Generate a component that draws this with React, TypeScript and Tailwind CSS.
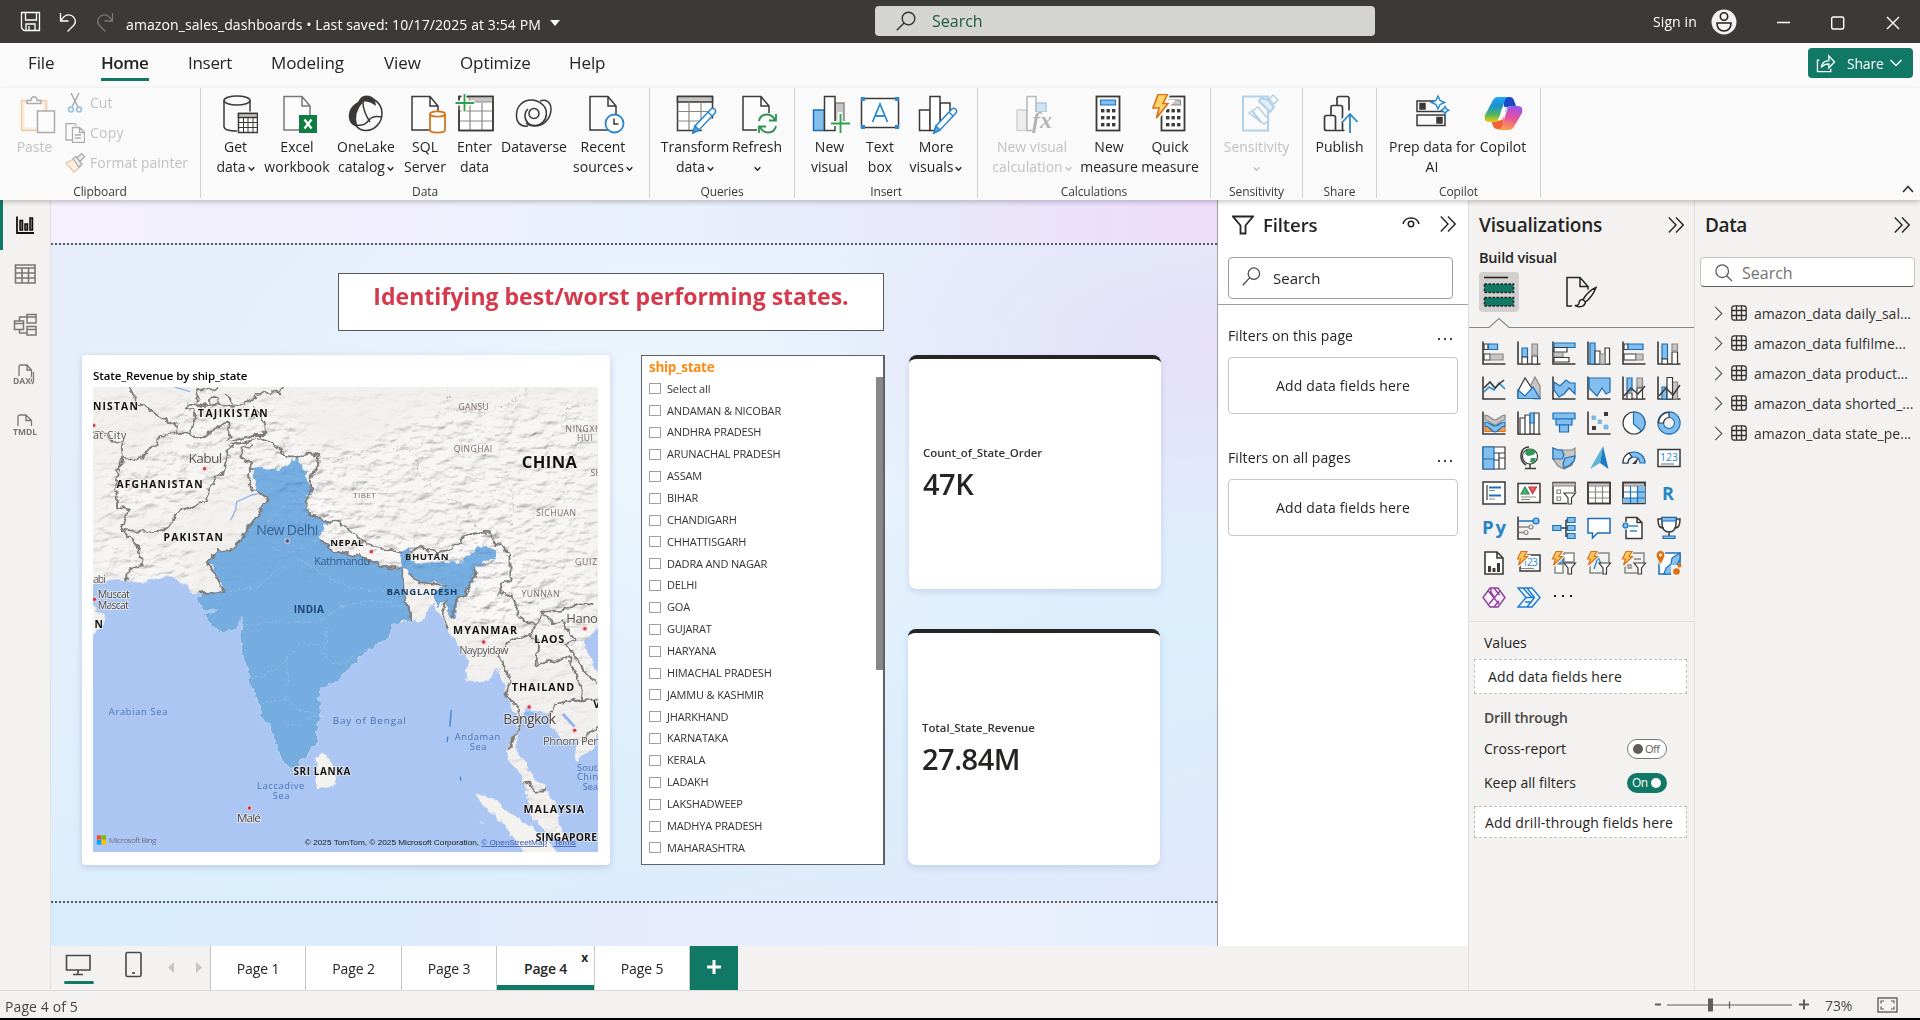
import React from "react";

type Kids = { children?: React.ReactNode };

const D = "#3b3a39";
const G = "#8a8886";
const L = "#c8c6c4";
const B = "#1a6fb8";
const F = "#83beec";

/* ---------- ribbon icons, drawn in a 44 x 40 box ---------- */
function RI({ children, dim }: Kids & { dim?: boolean }) {
  return (
    <svg viewBox="0 0 44 40" className={dim ? "h-10 w-11 shrink-0 opacity-35" : "h-10 w-11 shrink-0"} fill="none" stroke={D} strokeWidth="1.5">
      {children}
    </svg>
  );
}

const page = (x: number, s = D) => <path d={`M${x} 2.5h18l8 9.5v24h-26zM${x + 18} 2.5v9.5h8`} stroke={s} fill="#fcfcfc" />;
const pencil = (
  <g stroke="#2a86cc" fill="#fff" strokeWidth="1.5">
    <path d="M20 39l2-7 16-17c2-2 6 1 4 4l-16 17z" />
    <path d="M20 39l2-7 4 4z" fill="#5aa9e0" />
    <path d="M35 18l4 4" />
  </g>
);
const calc = (x: number, accent: string) => (
  <g>
    <rect x={x} y="2.5" width="23" height="34" fill="#fff" strokeWidth="1.8" />
    <rect x={x + 4} y="6" width="15" height="5" fill={accent} stroke={accent === F ? B : G} strokeWidth="1" />
    {[15, 22, 29].map((y) =>
      [4.5, 10, 15.5].map((dx) => <rect key={`${y}-${dx}`} x={x + dx} y={y} width="3.4" height="3.4" fill={D} stroke="none" />)
    )}
  </g>
);

const icGet = (
  <RI>
    <path d="M10 6.5v26c0 3 5 4.5 13 4.5M36 6.5v11" />
    <ellipse cx="23" cy="6.5" rx="13" ry="4.5" />
    <rect x="24.5" y="19.5" width="19" height="19" fill="#fff" />
    <rect x="24.5" y="19.5" width="19" height="4" fill={L} />
    <path d="M24.5 23.5h19M24.5 28.5h19M24.5 33.5h19M29.5 23.5v15M34 23.5v15M39 23.5v15" strokeWidth="1" />
  </RI>
);
const icExcel = (
  <RI>
    {page(9, "#7a7876")}
    <rect x="24" y="21" width="18" height="18" fill="#107c41" stroke="none" />
    <path d="M29.5 25.5l7 9M36.5 25.5l-7 9" stroke="#fff" strokeWidth="2.2" />
  </RI>
);
const icLake = (
  <RI>
    <path d="M19 7c-8 2-14 8-13.5 16 .5 5 3 8 7 9-3-9 0-18 6.5-25z" fill={D} />
    <path d="M15 8c2-5 6-6.5 10-5.5 4 1 6 4 6 8-5-4-10-5-16-2.5z" fill={D} />
    <path d="M29 5c6 3 9 8.5 9 14.5 0 9-7 17-16 17-4 0-8-2-10-5" />
    <path d="M19 8c0 8 3 14 7 20M12 31c7 1 10-1 13-5s8-4 13-3" />
  </RI>
);
const icSql = (
  <RI>
    {page(9)}
    <path d="M27 20v16c0 3.5 15 3.5 15 0V20" fill="#fff" stroke="#d8741c" strokeWidth="1.8" />
    <ellipse cx="34.5" cy="20" rx="7.5" ry="2.6" fill="#fff" stroke="#d8741c" strokeWidth="1.8" />
  </RI>
);
const icEnter = (
  <RI>
    <rect x="6" y="2.5" width="34" height="34" fill="#fff" />
    <rect x="16" y="2.5" width="24" height="5.5" fill={L} stroke={G} strokeWidth="1" />
    <path d="M6 17h34M6 27h34M17 9v28M29 9v28" stroke={G} strokeWidth="1.2" />
    <path d="M6 8V2.5h34v34H6V16" />
    <path d="M11 -1v20M1.5 9h20" stroke="#fafafa" strokeWidth="5" />
    <path d="M11.5 0v17.5M2.5 9h18.5" stroke="#2fa14b" strokeWidth="1.8" />
  </RI>
);
const icVerse = (
  <RI>
    <circle cx="22" cy="19.5" r="5" />
    <path d="M16 32C8 33 4 28 4.5 20 5 12 11 6 19 6c5 0 9 2 12 5 5 5 4 13 0 17-4 4-11 5-15 1-4-4-4-11 0-14" />
    <path d="M28 7c6-2 11 1 11 8 0 9-7 17-16 17-4 0-7-1-9-3" />
  </RI>
);
const icRecent = (
  <RI>
    {page(9)}
    <circle cx="33.5" cy="29.5" r="9" fill="#fff" stroke="#2a86cc" strokeWidth="1.8" />
    <path d="M33 24.5v5.5h4.5" />
  </RI>
);
const icTransform = (
  <RI>
    <rect x="4.5" y="2.5" width="35" height="34" fill="#fff" />
    <rect x="4.5" y="2.5" width="35" height="5.5" fill={L} />
    <path d="M4.5 17.5h35M4.5 27h28M16 8v28M28 8v20" stroke={G} strokeWidth="1.2" />
    <path d="M24 42l16-18h6v16z" fill="#fafafa" stroke="none" />
    {pencil}
  </RI>
);
const icRefresh = (
  <RI>
    {page(8)}
    <rect x="22" y="19" width="21" height="21" fill="#fafafa" stroke="none" />
    <path d="M24 27c1-5 5-6.5 8-6.5 4 0 6.5 2.5 8 5.5M41 20v6.5h-7M41 32c-1 5-5 6.5-8 6.5-4 0-6.5-2.5-8-5.5M24 39v-6.5h7" stroke="#2f9150" strokeWidth="1.8" />
  </RI>
);
const icNewVis = (
  <RI>
    <rect x="5.5" y="16" width="11" height="20.5" fill={F} stroke={B} />
    <rect x="27" y="9" width="9" height="20" fill={L} stroke={G} />
    <rect x="16.5" y="2.5" width="10.5" height="34" fill="#fff" />
    <path d="M32 18v22M22 29.5h22" stroke="#fafafa" strokeWidth="5" />
    <path d="M32.5 20v19M23 29.5h19" stroke="#2fa14b" strokeWidth="1.8" />
  </RI>
);
const icText = (
  <RI>
    <rect x="3.5" y="4.5" width="37" height="29" fill="#fff" />
    {[3, 37].map((x) => [3, 31].map((y) => <rect key={`${x}${y}`} x={x} y={y} width="4" height="4" fill="#2a8ad4" stroke="none" />))}
    <path d="M14.5 28l7.5-18 7.5 18M17.5 22h9" stroke="#2a8ad4" strokeWidth="1.8" />
  </RI>
);
const icMore = (
  <RI>
    <rect x="5.5" y="16" width="10.5" height="20.5" fill="#fff" />
    <rect x="26" y="9" width="10" height="27.5" fill="#fff" />
    <rect x="16" y="2.5" width="10" height="34" fill="#fff" />
    <path d="M18 42l20-26h8v24z" fill="#fafafa" stroke="none" />
    {pencil}
  </RI>
);
const icNewCalc = (
  <RI dim>
    <rect x="7" y="16" width="10" height="20.5" fill="#d8d6d4" stroke={G} />
    <rect x="26" y="9" width="10" height="9" fill={F} stroke={B} />
    <rect x="17" y="2.5" width="9" height="34" fill="#fff" />
    <rect x="22" y="18" width="22" height="22" fill="#fafafa" stroke="none" />
    <text x="22" y="34" fontFamily="Liberation Serif, serif" fontStyle="italic" fontWeight="700" fontSize="24" fill="#333" stroke="none">fx</text>
  </RI>
);
const icMeasure = <RI>{calc(9.5, F)}</RI>;
const icQuick = (
  <RI>
    {calc(13.5, L)}
    <path d="M9 -1h12l-5 9h7L9 24l2.5-9H4z" fill="#fafafa" stroke="#fafafa" strokeWidth="4" />
    <path d="M10 .5h9.5l-4.5 9h5L8.5 24l2.5-10H5z" fill="#fdd36b" stroke="#d8741c" strokeWidth="1.6" />
  </RI>
);
const icSens = (
  <RI dim>
    <rect x="8" y="2.5" width="25" height="34" stroke="#2a86cc" strokeWidth="2" />
    <path d="M14 19l9-6 11 13-5 4z" fill="#fff" stroke="#2a86cc" />
    <path d="M17 17l9 11M26 4l7 2 6 7-4 5-11-11z" fill="#b9d9f0" stroke="#2a86cc" strokeWidth="2" />
    <path d="M34 5l4-4 5 5-4 4z" fill="#fff" stroke="#2a86cc" />
  </RI>
);
const icPublish = (
  <RI>
    <path d="M6.5 23.5q0-2 2-2h7q2 0 2 2v13h-9q-2 0-2-2zM13 21v-7.5q0-2 2-2h7.5q2 0 2 2v23M19 11V4.5q0-2 2-2h8q2 0 2 2v12M17.5 36.5h9" strokeWidth="1.7" />
    <path d="M32 20v19M24.5 28l7.5-8 7.5 8" stroke="#fafafa" strokeWidth="5" />
    <path d="M32 20.5V39M24.5 28l7.5-8 7.5 8" stroke="#2a86cc" strokeWidth="1.8" />
  </RI>
);
const icPrep = (
  <RI>
    <rect x="7" y="7" width="28" height="10.5" />
    <rect x="7" y="21" width="28" height="10.5" />
    <rect x="10" y="9.5" width="5" height="5.5" fill={D} />
    <rect x="27" y="23.5" width="5" height="5.5" fill={D} />
    <path d="M19 0h20v16h-4l-2 1z" fill="#fafafa" stroke="none" />
    <path d="M28 2l2 4.5 4.5 2-4.5 2-2 4.5-2-4.5-4.5-2 4.5-2z" stroke="#2a8ad4" fill="#fff" />
    <path d="M35 12.5l1.3 2.4 2.4 1.3-2.4 1.3L35 20l-1.3-2.5-2.4-1.3 2.4-1.3z" stroke="#2a8ad4" fill="#fff" />
  </RI>
);
const icCopilot = (
  <svg viewBox="0 0 44 40" className="h-10 w-11 shrink-0">
    <defs>
      <linearGradient id="cpA" x1="0" y1="0" x2="0" y2="1">
        <stop offset="0" stopColor="#1fa5f0" />
        <stop offset=".35" stopColor="#1d8fd0" />
        <stop offset=".7" stopColor="#4fb860" />
        <stop offset="1" stopColor="#f2c811" />
      </linearGradient>
      <linearGradient id="cpB" x1=".6" y1="0" x2=".4" y2="1">
        <stop offset="0" stopColor="#9a55ee" />
        <stop offset=".5" stopColor="#e8539a" />
        <stop offset="1" stopColor="#fda047" />
      </linearGradient>
    </defs>
    <path d="M22 3h7c3 0 4 3 5 6l1 3h-4c-5 0-6 3-7 7z" fill="#1b48c8" />
    <path d="M22 35h-6c-3 0-4-3-5-6l-1-3h6c4 0 6-3 7-7z" fill="#f0643c" />
    <path d="M11 8c1-3 3-5 6-5h11c-3 0-4 3-5 6l-4 14c-1 3-2 5-5 5H8c-4 0-5-3-4-7z" fill="url(#cpA)" />
    <path d="M34 31c-1 3-4 5-7 5H16c4 0 5-4 6-7l4-13c1-3 2-4 5-4h6c4 0 5 3 4 7z" fill="url(#cpB)" />
    <path d="M22.5 13h3.8c-1.5 1.5-2 4-3 7.5-1 4-2 5.5-4.5 6h-2.5c2-2 3.5-8 4-10 .4-1.6 1-3 2.2-3.5z" fill="#fff" />
  </svg>
);

function Caret({ className = "" }: { className?: string }) {
  return (
    <svg viewBox="0 0 8 6" className={"inline-block h-1.5 w-[7px] " + className} fill="none" stroke="currentColor" strokeWidth="1.6">
      <path d="M.8 1l3.2 3.4L7.2 1" />
    </svg>
  );
}

type BtnProps = { w: string; icon: React.ReactNode; a: string; b?: string; caret?: boolean; dim?: boolean };
function Btn({ w, icon, a, b, caret, dim }: BtnProps) {
  return (
    <div className={`flex shrink-0 flex-col items-center whitespace-nowrap text-[14px] leading-5 tracking-[0.02px] ${w} ${dim ? "text-[#c4c2c0]" : "text-[#252423]"}`}>
      {icon}
      <span className="mt-[3px]">{a}</span>
      <span className="flex h-5 items-center gap-0.5">
        {b}
        {caret && <Caret className="mt-1" />}
      </span>
    </div>
  );
}

function Group({ w, label, pl = "", children, center }: Kids & { w: string; label: string; pl?: string; center?: boolean }) {
  return (
    <div className={`flex h-[110px] shrink-0 flex-col border-r border-[#d2d0ce] ${w}`}>
      <div className={`flex h-[97px] shrink-0 pt-1.5 ${pl} ${center ? "justify-center" : ""}`}>{children}</div>
      <div className="text-center text-[12px] leading-[13px] tracking-[-0.1px] text-[#3b3a39]">{label}</div>
    </div>
  );
}

/* ---------- title bar, menu and ribbon ---------- */
function TitleBar() {
  return (
    <div className="flex h-[43px] items-center bg-[#3b3a37] text-white">
      <svg viewBox="0 0 100 24" className="ml-5 h-6 w-[100px] shrink-0" fill="none" stroke="#fff" strokeWidth="1.3">
        <path d="M1.5 2.5h18v18H4l-2.5-2.5zM5.5 2.5v7.5h11V2.5M6 20.5v-6.5h9v6.5M9 16v4.5" />
        <path d="M40.5 3v8h8M41 10.5c3-5 7-6.5 10.5-5 4 2 5 6.5 2.5 9.5l-6.5 6.5" />
        <path d="M92.5 3v8h-8M92 10.5c-3-5-7-6.5-10.5-5-4 2-5 6.5-2.5 9.5l6.5 6.5" stroke="#7c7a78" />
      </svg>
      <div className="ml-[6px] mt-[5px] w-[416px] shrink-0 whitespace-nowrap text-[14px] tracking-[0.1px]">
        amazon_sales_dashboards • Last saved: 10/17/2025 at 3:54 PM
      </div>
      <svg viewBox="0 0 10 6" className="ml-2 mt-0.5 h-1.5 w-2.5 shrink-0" fill="#fff"><path d="M0 0h10L5 6z" /></svg>
      <div className="-mt-px ml-[315px] flex h-[30px] w-[500px] shrink-0 items-center rounded-sm bg-[#d4d4d2] text-[16px] text-[#1d5a48]">
        <svg viewBox="0 0 20 20" className="ml-[21px] mr-4 h-5 w-5" fill="none" stroke="#333" strokeWidth="1.4">
          <circle cx="12.5" cy="7.5" r="6.3" /><path d="M8 12L.8 19.2" />
        </svg>
        Search
      </div>
      <div className="ml-[278px] w-[47px] whitespace-nowrap text-[14px] tracking-[0.1px]">Sign in</div>
      <svg viewBox="0 0 26 26" className="ml-[11px] h-[26px] w-[26px]" fill="none" stroke="#222" strokeWidth="1.6">
        <circle cx="13" cy="13" r="12.5" fill="#f3f2f1" stroke="none" />
        <circle cx="13" cy="7.5" r="3.7" /><path d="M6 14h14c0 5-3 8-7 8s-7-3-7-8z" />
      </svg>
      <svg viewBox="0 0 124 14" className="ml-[39px] mt-[3px] h-3.5 w-[124px]" fill="none" stroke="#fff" strokeWidth="1.4">
        <path d="M1 6.5h13M111 1l12 12M123 1l-12 12" />
        <rect x="55.7" y="1" width="12" height="12" rx="1.5" />
      </svg>
    </div>
  );
}

function Menu() {
  return (
    <div className="flex h-[45px] items-start bg-[#fafafa] text-[17px] text-[#252423]">
      <div className="flex whitespace-nowrap pt-[7px] leading-[26px] tracking-[-0.1px]">
        <span className="ml-7 w-[73px]">File</span>
        <span className="flex w-[48px] flex-col font-semibold tracking-[-0.45px]">Home<i className="mt-[2px] block h-[3px] bg-[#117865]" /></span>
        <span className="ml-[39px] w-[83px] tracking-[-0.3px]">Insert</span>
        <span className="w-[113px]">Modeling</span>
        <span className="w-[76px]">View</span>
        <span className="w-[109px]">Optimize</span>
        <span>Help</span>
      </div>
      <div className="ml-auto mr-[7px] mt-[5px] flex h-[30px] w-[105px] items-center rounded bg-[#117865] text-[14px] text-white">
        <svg viewBox="0 0 20 20" className="ml-2 mr-[11px] h-[19px] w-5" fill="none" stroke="#fff" strokeWidth="1.4">
          <path d="M3 6.5H1v12h14v-3M5 14c1-5 4-7 8-7V2l6 6.5-6 6v-4c-4 0-6 1-8 3.5z" />
        </svg>
        <span className="tracking-[-0.2px]">Share</span>
        <svg viewBox="0 0 12 8" className="ml-[6px] h-2 w-3" fill="none" stroke="#fff" strokeWidth="1.4"><path d="M.5 1L6 6.5 11.5 1" /></svg>
      </div>
    </div>
  );
}

function Ribbon() {
  return (
    <div className="relative z-10 flex h-[112px] bg-[#fafafa] shadow-[0_2px_5px_rgba(0,0,0,0.22)]">
      <div className="flex h-[110px] w-[201px] shrink-0 flex-col border-r border-[#d2d0ce]">
        <div className="flex h-[97px] shrink-0">
          <div className="ml-2.5 flex w-[50px] flex-col items-center pt-[6px] text-[14px] leading-5 text-[#c4c2c0]">
            <svg viewBox="0 0 44 40" className="h-10 w-11 opacity-40" fill="none" stroke={D} strokeWidth="1.5">
              <rect x="8.5" y="6.5" width="25" height="30" stroke="#d98f35" fill="#f8d8a8" />
              <rect x="11.5" y="9.5" width="19" height="24" stroke="none" fill="#fff" />
              <path d="M14 9.5V6.5h4c0-5 6-5 6 0h4v3z" fill="#fff" />
              <rect x="24.5" y="17" width="17" height="21.5" fill="#fff" />
            </svg>
            <span className="-ml-px mt-[3px]">Paste</span>
          </div>
          <div className="ml-[5px] flex flex-col whitespace-nowrap text-[14px] leading-[30px] text-[#c4c2c0]">
            <div className="flex items-center">
              <svg viewBox="0 0 20 20" className="mr-[5px] h-5 w-5 opacity-45" fill="none" stroke={D} strokeWidth="1.3">
                <path d="M6 0l7 14M14 0L7 14" /><g stroke="#2a86cc" strokeWidth="1.8"><circle cx="6" cy="16.5" r="2.4" /><circle cx="14" cy="16.5" r="2.4" /></g>
              </svg>
              Cut
            </div>
            <div className="flex items-center">
              <svg viewBox="0 0 20 20" className="mr-[5px] h-5 w-5 opacity-40" fill="none" stroke={D} strokeWidth="1.3">
                <path d="M7 17H1V.7h9l1.5 2M7.5 4.5h7l5 5v10h-12zM14.5 4.5v5h5M10 12h6M10 15h6" />
              </svg>
              <span className="tracking-[0.25px]">Copy</span>
            </div>
            <div className="flex items-center">
              <svg viewBox="0 0 20 20" className="mr-[5px] h-5 w-5 opacity-40" fill="none" stroke={D} strokeWidth="1.3">
                <path d="M1 10l8-4 6 8-6 5z" stroke="#d8741c" fill="#fbe0bd" /><path d="M8 5.5l3-2 6 8-3 2.5zM12 5l4.5-4.5 3 3L15 8.5" fill="#ddd" />
              </svg>
              <span className="tracking-[0.02px]">Format painter</span>
            </div>
          </div>
        </div>
        <div className="text-center text-[12px] leading-[13px] tracking-[-0.1px] text-[#3b3a39]">Clipboard</div>
      </div>
      <Group w="w-[449px]" label="Data" pl="pl-[4px]">
        <Btn w="w-[61px]" icon={icGet} a="Get" b="data" caret />
        <Btn w="w-[62px]" icon={icExcel} a="Excel" b="workbook" />
        <Btn w="w-[76px]" icon={icLake} a="OneLake" b="catalog" caret />
        <Btn w="w-[42px]" icon={icSql} a="SQL" b="Server" />
        <Btn w="w-[57px]" icon={icEnter} a="Enter" b="data" />
        <Btn w="w-[62px]" icon={icVerse} a="Dataverse" />
        <Btn w="w-[76px]" icon={icRecent} a="Recent" b="sources" caret />
      </Group>
      <Group w="w-[145px]" label="Queries" pl="pl-[10px]">
        <Btn w="w-[70px]" icon={icTransform} a="Transform" b="data" caret />
        <Btn w="w-[54px]" icon={icRefresh} a="Refresh" caret />
      </Group>
      <Group w="w-[183px]" label="Insert" pl="pl-[5px]">
        <Btn w="w-[59px]" icon={icNewVis} a="New" b="visual" />
        <Btn w="w-[42px]" icon={icText} a="Text" b="box" />
        <Btn w="w-[70px]" icon={icMore} a="More" b="visuals" caret />
      </Group>
      <Group w="w-[233px]" label="Calculations" pl="pl-[5px]">
        <Btn w="w-[98px]" icon={icNewCalc} a="New visual" b="calculation" caret dim />
        <Btn w="w-[56px]" icon={icMeasure} a="New" b="measure" />
        <Btn w="w-[66px]" icon={icQuick} a="Quick" b="measure" />
      </Group>
      <Group w="w-[92px]" label="Sensitivity" center>
        <Btn w="w-[70px]" icon={icSens} a="Sensitivity" caret dim />
      </Group>
      <Group w="w-[74px]" label="Share" center>
        <Btn w="w-[60px]" icon={icPublish} a="Publish" />
      </Group>
      <Group w="w-[164px]" label="Copilot" pl="pl-[5px]">
        <Btn w="w-[100px]" icon={icPrep} a="Prep data for" b="AI" />
        <Btn w="w-[42px]" icon={icCopilot} a="Copilot" />
      </Group>
      <svg viewBox="0 0 12 8" className="mb-[7px] ml-auto mr-[6px] h-2 w-3 self-end" fill="none" stroke={D} strokeWidth="1.8"><path d="M1 7l5-5.5L11 7" /></svg>
    </div>
  );
}

/* ---------- left rail ---------- */
function Rail() {
  const s = "h-6 w-6 shrink-0";
  return (
    <div className="flex w-[51px] shrink-0 border-r border-[#e1dfdd] bg-[#f3f2f1]">
      <div className="h-[50px] w-[3px] bg-[#117865]" />
      <div className="flex flex-1 flex-col items-center gap-[26px] pr-[3px] pt-[13px]">
        <svg viewBox="0 0 24 24" className={s} fill="none" stroke="#111" strokeWidth="1.5"><path d="M4 3.5v16.5h17" strokeWidth="1.8" /><path d="M7 7.5h2.5v9.5H7zM12 11h2.5v6H12zM17 5h2.5v12H17z" fill="#8a8886" /></svg>
        <svg viewBox="0 0 24 24" className={s} fill="none" stroke="#797775" strokeWidth="1.6"><path d="M2.5 2h19.5v18H2.5zM2.5 5h19.5M2.5 10h19.5M2.5 15h19.5M9 5v15M15.5 5v15" /></svg>
        <svg viewBox="0 0 24 24" className={s} fill="none" stroke="#797775" strokeWidth="1.5"><path d="M1.5 8h9v8.5h-9zM1.5 10.5h9M14 1.5h9v8.5h-9zM14 4h9M14 13.5h9V22h-9zM14 16.5h9M6.5 8V4H14M6.5 16.5V20H14" /></svg>
        <svg viewBox="0 0 24 24" className={s} fill="none" stroke="#797775" strokeWidth="1.3"><path d="M6 13V4q0-2 2-2h6l4.5 5v9q0 4-3 4M14 2v5h4.5M20.5 9v8c0 3-1 4-3 4.5" /><text x="0" y="20.5" fontSize="8.5" fontWeight="700" fill="#797775" stroke="#f3f2f1" strokeWidth="2" paintOrder="stroke" fontFamily="Open Sans, sans-serif">DAX</text></svg>
        <svg viewBox="0 0 24 24" className={s} fill="none" stroke="#797775" strokeWidth="1.3"><path d="M5 13V4q0-2 2-2h6l5.5 5.5v5.5M13 2v5.5h5.5" /><text x="0" y="22" fontSize="8.5" fontWeight="700" textLength="24" fill="#797775" stroke="none" fontFamily="Open Sans, sans-serif">TMDL</text></svg>
      </div>
    </div>
  );
}

/* ---------- map ---------- */
const LAND =
  "M20 120H1530V865H1504L1462 910 1470 935 1478 950 1504 1000H1530V1180H1504L1490 1220 1440 1265 1435 1230 1450 1210 1420 1200 1400 1195 1370 1160 1362 1125 1330 1115 1300 1105 1285 1125 1280 1155 1265 1200 1270 1240 1300 1280 1310 1310 1350 1340 1385 1400 1395 1460 1418 1500 1390 1505 1360 1480 1310 1430 1300 1380 1295 1330 1270 1290 1240 1260 1245 1220 1270 1170 1265 1130 1250 1090 1235 1050 1225 1010 1210 985 1190 1015 1170 1028 1150 1030 1118 1020 1130 970 1110 930 1085 890 1068 870 1060 855 1050 830 1025 795 1010 805 1000 835 965 845 930 845 900 700 420 735 395 765 345 760 320 758 312 738 290 725 275 712 240 715 200 718 170 730 140 725 100 718 80 722 38 735H20Z";
const INDIA =
  "M508 388L525 382 545 388 580 388 605 375 630 354 640 375 642 385 658 395 655 415 662 425 675 445 670 468 648 465 658 490 658 512 672 518 690 530 720 548 700 575 697 600 718 612 740 635 765 640 780 648 815 650 850 665 880 680 910 683 932 680 935 635 950 625 957 635 955 660 980 672 1060 668 1110 665 1140 640 1160 622 1180 620 1203 632 1205 655 1192 652 1170 670 1148 685 1145 705 1137 735 1125 750 1118 765 1097 770 1093 800 1090 830 1078 835 1070 815 1065 780 1052 785 1040 803 1030 785 1025 768 1040 745 1060 740 1058 730 1030 725 985 727 980 712 960 702 940 685 932 695 940 720 935 750 950 780 958 815 965 845 955 840 945 845 938 835 925 845 900 852 900 880 885 900 870 908 835 925 815 950 790 975 765 1000 755 1015 720 1035 712 1040 698 1045 693 1070 698 1110 695 1140 685 1175 685 1215 668 1222 662 1242 640 1255 632 1275 612 1284 590 1260 580 1235 570 1200 555 1165 545 1150 530 1130 525 1095 490 1020 485 980 472 930 470 880 474 850 464 826 455 858 435 870 415 877 385 858 360 824 390 820 402 805 370 808 345 790 343 775 360 762 418 755 415 730 395 705 390 680 372 665 385 645 400 630 415 635 450 620 460 600 480 580 485 560 505 540 528 510 525 490 548 478 530 462 512 450 515 430 507 410Z";
const ISLANDS =
  "M705 1235L728 1262 745 1310 738 1338 715 1347 690 1340 683 1300 685 1262ZM1148 1360L1200 1375 1250 1420 1310 1460 1360 1500 1395 1550H1295L1262 1500 1225 1450 1200 1420 1165 1390ZM20 795H38L50 812 76 828 70 850 50 870 38 888H20ZM1160 1445L1178 1456 1165 1452ZM1504 1150L1440 1262 1440 1230Z";
const BORDERS =
  "M145 141L165 185 195 205 225 225 265 250 285 262 280 280 245 283 230 290 225 315 200 330 185 350 165 362 125 350M38 275L60 270 85 285 92 305 120 310 125 350 115 380 105 420 108 500 140 508 135 530 118 565 150 575 200 575 245 570 275 545 278 525 310 500 322 508 345 490 365 490 375 440 390 430 388 410 415 405 425 370 435 345 425 330 450 312 480 306 520 295 560 310 580 330 605 352 630 352 660 338 695 345 690 380 670 410 672 450M118 565L150 600 170 625 172 650 185 658 182 676 150 685 138 700 135 727M285 278L320 282 330 295 370 285 400 260 430 250 437 290 430 305M320 282L335 250 330 215 312 208 315 190 360 198 400 190 430 200 470 190 505 180 510 165 540 155 580 160 590 141M505 198L530 230 540 285 500 285 440 305M345 190L335 162 348 150 380 152 400 141M380 190C360 170 405 160 405 190M425 165L445 190M508 388L490 385 492 420 498 448 525 460 548 478 525 490 528 510 505 540 480 580 450 620 415 635 400 630 372 665 395 705 418 755 345 760M490 385L500 372 465 350 470 325 500 315M672 450L658 475 658 512 720 548 740 542 780 570 820 600 850 620 895 628 935 635M697 600L740 635 815 650 880 680 932 683M957 635L990 620 1040 640 1080 625 1115 590 1145 580 1190 578 1205 615 1225 612 1250 650 1250 720 1225 728 1220 760 1255 770 1275 810 1270 825 1300 850 1325 850 1345 815 1400 812 1450 790 1490 795M1148 685L1145 705 1118 765 1097 770 1078 835M1068 870L1052 820 1065 780M935 690L940 750 965 845M960 702L985 727 1060 735M1325 850L1310 885 1250 900 1215 940 1230 980 1250 1020 1238 1060 1268 1100 1280 1150 1262 1190 1248 1225M1310 885L1330 910 1325 980 1360 960 1380 965 1420 950 1440 1000 1455 1040 1458 1080 1380 1090 1362 1125M1345 825L1380 850 1400 840 1410 860 1440 900 1410 915 1430 940 1470 1000 1504 1030M1458 1085L1480 1075 1504 1080M1462 1200L1480 1175 1504 1160M1295 1325L1305 1335 1320 1355 1345 1355 1352 1342";

type Lab = [string, number, number, number, number, string, number];
const LABELS: Lab[] = [
  ["NISTAN", 38, 210, 130, 30, "#111", 700], ["TAJIKISTAN", 343, 231, 202, 30, "#111", 700], ["AFGHANISTAN", 106, 445, 250, 30, "#111", 700],
  ["PAKISTAN", 243, 603, 172, 30, "#111", 700], ["NEPAL", 727, 617, 96, 28, "#111", 700], ["BHUTAN", 944, 661, 126, 28, "#222", 700],
  ["BANGLADESH", 890, 765, 206, 28, "#1d3f66", 700], ["INDIA", 621, 819, 87, 29, "#1c4572", 700], ["CHINA", 1283, 385, 160, 48, "#111", 700],
  ["MYANMAR", 1083, 882, 186, 31, "#111", 700], ["LAOS", 1319, 910, 87, 31, "#111", 700], ["THAILAND", 1254, 1052, 181, 31, "#111", 700],
  ["SRI LANKA", 620, 1306, 165, 29, "#111", 700], ["MALAYSIA", 1288, 1418, 176, 31, "#111", 700], ["SINGAPORE", 1323, 1504, 178, 30, "#111", 700],
  ["N", 42, 864, 26, 30, "#111", 700], ["V", 1490, 1105, 20, 30, "#111", 700],
  ["GANSU", 1099, 211, 88, 25, "#7d6a70", 400], ["QINGHAI", 1085, 337, 112, 25, "#7d6a70", 400], ["TIBET", 793, 474, 66, 24, "#7d6a70", 400],
  ["NINGXI", 1410, 277, 92, 25, "#7d6a70", 400], ["HUI", 1443, 302, 46, 25, "#7d6a70", 400], ["SICHUAN", 1325, 529, 115, 25, "#7d6a70", 400],
  ["SHA", 1482, 409, 50, 25, "#7d6a70", 400], ["GUIZH", 1437, 674, 85, 25, "#7d6a70", 400], ["YUNNAN", 1282, 770, 110, 25, "#7d6a70", 400],
  ["Kabul", 315, 368, 98, 40, "#555", 400], ["at·City", 38, 298, 97, 31, "#555", 400], ["New Delhi", 512, 586, 180, 41, "#35618f", 400],
  ["Kathmandu", 680, 675, 163, 32, "#36608f", 400], ["abi", 38, 730, 37, 31, "#555", 400], ["Muscat", 52, 775, 93, 31, "#444", 400], ["Mascat", 52, 808, 90, 31, "#444", 400],
  ["Hano", 1412, 849, 92, 38, "#555", 400], ["Naypyidaw", 1102, 942, 142, 31, "#555", 400], ["Bangkok", 1229, 1152, 153, 41, "#444", 400],
  ["Phnom Penh", 1344, 1216, 185, 33, "#555", 400], ["Malé", 455, 1445, 71, 35, "#444", 400],
  ["Arabian Sea", 84, 1125, 170, 27, "#4a72b4", 400], ["Bay of Bengal", 734, 1152, 212, 29, "#4a72b4", 400],
  ["Andaman", 1088, 1201, 132, 27, "#4a72b4", 400], ["Sea", 1132, 1231, 48, 27, "#4a72b4", 400], ["Laccadive", 514, 1346, 137, 27, "#4a72b4", 400],
  ["Sea", 560, 1376, 48, 27, "#4a72b4", 400], ["South", 1443, 1292, 75, 27, "#4a72b4", 400], ["China", 1443, 1321, 78, 27, "#4a72b4", 400], ["Sea", 1460, 1351, 44, 27, "#4a72b4", 400],
];
const DOTS: [number, number][] = [[362, 386], [846, 635], [602, 603], [1172, 906], [1466, 866], [1304, 1101], [1436, 1171], [492, 1404], [40, 256], [42, 778]];

function MapVisual() {
  return (
    <svg viewBox="38 141 1466 1395" preserveAspectRatio="none" className="block h-[465px] w-[505px] overflow-hidden" fontFamily="Open Sans, Noto Sans, sans-serif">
      <defs>
        <filter id="relief" x="0" y="0" width="100%" height="100%">
          <feTurbulence type="fractalNoise" baseFrequency="0.02 0.034" numOctaves="5" seed="8" result="n" />
          <feDiffuseLighting in="n" surfaceScale="16" diffuseConstant="1.2" lightingColor="#fff">
            <feDistantLight azimuth="235" elevation="56" />
          </feDiffuseLighting>
        </filter>
        <filter id="rough" filterUnits="userSpaceOnUse" x="10" y="110" width="1530" height="1460" colorInterpolationFilters="sRGB">
          <feTurbulence type="fractalNoise" baseFrequency="0.05" numOctaves="2" seed="3" result="n" />
          <feDisplacementMap in="SourceGraphic" in2="n" scale="22" xChannelSelector="R" yChannelSelector="G" />
        </filter>
        <filter id="soft"><feGaussianBlur stdDeviation="28" /></filter>
        <clipPath id="landClip"><path d={LAND} /></clipPath>
        <mask id="hills">
          <g filter="url(#soft)">
            <rect x="38" y="141" width="1466" height="1400" fill="#303030" />
            <path d="M300 180L560 200 660 320 800 340 1060 220 1504 200V1000L1300 860 1220 620 1100 560 800 540 680 500 500 380 300 500 100 520 60 400 250 350Z" fill="#aaa" />
            <path d="M600 380L720 500 860 600 1100 600 1200 560 1300 700 1260 860 1130 860 1180 680 1100 660 880 670 640 520Z" fill="#fff" />
            <path d="M38 540L150 600 300 600 330 740H38Z" fill="#999" />
            <path d="M600 200H1000L800 320H680Z" fill="#111" />
            <path d="M400 480L520 480 400 640 350 740 300 620Z" fill="#222" />
          </g>
        </mask>
      </defs>
      <rect x="38" y="141" width="1466" height="1395" fill="#abc6f3" />
      <g filter="url(#rough)">
        <path d={LAND} fill="#f2f0ed" />
        <path d={INDIA} fill="#f2f0ed" stroke="#f2f0ed" strokeWidth="4" />
        <path d={ISLANDS} fill="#f4f2ef" />
      </g>
      <g clipPath="url(#landClip)">
        <g mask="url(#hills)" className="mix-blend-multiply">
          <rect x="38" y="141" width="1466" height="1395" filter="url(#relief)" opacity=".6" />
        </g>
      </g>
      <g fill="none" stroke="#8fb4ee" strokeWidth="4">
        <path d="M438 540L452 510 455 485 500 465 518 460M275 141L320 155" />
        <path d="M1078 1110L1074 1160M1068 1190L1066 1206M1104 1310L1106 1322" stroke="#3f86d0" />
        <path d="M1290 1125h28" strokeWidth="18" />
        <path d="M1402 1122L1436 1160" strokeWidth="8" />
      </g>
      <g filter="url(#rough)">
        <path d={INDIA} fill="#2f86d8" fillOpacity=".64" />
        <path d={INDIA} fill="none" stroke="#5b9bd8" strokeWidth="2" />
      </g>
      <path
        d="M548 540L600 500 648 465M548 620L600 640 690 600M420 755L520 740 560 700 640 660 700 700 780 740 930 760M470 850L560 850 690 845 760 800 850 780 950 800M500 1020L560 990 600 960 640 910 690 915 730 970 765 970 835 925M525 1090L600 1080 640 1110 690 1120M600 1160L640 1150 695 1120M600 960L605 1100M720 850L710 960"
        fill="none" stroke="#a5c8ea" strokeWidth="2" strokeDasharray="7 5" filter="url(#rough)"
      />
      <path d="M680 355L780 355 860 320 950 325 980 350 980 400 1040 460 1120 500 1150 560M1070 141L1070 210 1180 220 1300 160 1290 141M1400 260L1420 200 1470 200 1504 180M1200 410L1240 410 1260 470 1250 560M1460 550L1504 545" fill="none" stroke="#b9b5b0" strokeWidth="2.5" strokeDasharray="7 6" filter="url(#rough)" />
      <path d={BORDERS} fill="none" stroke="#7e7b78" strokeWidth="5.5" strokeLinejoin="round" filter="url(#rough)" />
      {DOTS.map(([x, y]) => (
        <g key={`${x}-${y}`}>
          <circle cx={x} cy={y} r="9" fill="#f7c9cd" opacity=".6" />
          <circle cx={x} cy={y} r="5" fill={x === 602 ? "#37508f" : "#d03a48"} />
        </g>
      ))}
      {LABELS.map(([t, x, y, w, fs, c, wt], i) => (
        <text
          key={i} x={x} y={y} fontSize={fs} fontWeight={wt} fill={c} textLength={w}
          stroke={c === "#111" || c === "#555" || c === "#444" ? "#f5f3f0" : "none"} strokeOpacity=".75" strokeWidth="5" paintOrder="stroke"
        >
          {t}
        </text>
      ))}
      <rect x="49" y="1486" width="13" height="13" fill="#f25022" /><rect x="63" y="1486" width="13" height="13" fill="#7fba00" />
      <rect x="49" y="1500" width="13" height="14" fill="#00a4ef" /><rect x="63" y="1500" width="13" height="14" fill="#ffb900" />
      <text x="84" y="1509" fontSize="24" textLength="138" fill="#6f7480">Microsoft Bing</text>
      <g fontFamily="Liberation Sans, sans-serif" fontSize="24">
        <text x="653" y="1515" textLength="506" fill="#222">© 2025 TomTom, © 2025 Microsoft Corporation,</text>
        <text x="1165" y="1515" textLength="191" fill="#3454b4" textDecoration="underline">© OpenStreetMap</text>
        <text x="1376" y="1515" textLength="64" fill="#3454b4" textDecoration="underline">Terms</text>
      </g>
    </svg>
  );
}

/* ---------- report canvas ---------- */
const STATES = [
  "Select all", "ANDAMAN & NICOBAR", "ANDHRA PRADESH", "ARUNACHAL PRADESH", "ASSAM", "BIHAR", "CHANDIGARH", "CHHATTISGARH",
  "DADRA AND NAGAR", "DELHI", "GOA", "GUJARAT", "HARYANA", "HIMACHAL PRADESH", "JAMMU & KASHMIR", "JHARKHAND", "KARNATAKA",
  "KERALA", "LADAKH", "LAKSHADWEEP", "MADHYA PRADESH", "MAHARASHTRA",
];

function Card({ label, value, h, cls }: { label: string; value: string; h: string; cls: string }) {
  return (
    <div className={`flex w-[252px] flex-col rounded-lg border-t-4 border-[#252423] bg-white pl-[14px] shadow-[0_3px_6px_rgba(80,100,160,0.18)] ${h} ${cls}`}>
      <div className="text-[11.5px] font-semibold leading-4 tracking-[-0.08px] text-[#333]">{label}</div>
      <div className="mt-[7px] text-[29px] font-semibold leading-8 tracking-[-0.5px] text-[#252423]">{value}</div>
    </div>
  );
}

function Canvas() {
  return (
    <div className="flex h-[746px] flex-col bg-[linear-gradient(90deg,#d8edfc_0%,#dcebfc_30%,#e6ebfc_50%,#e9effd_80%,#e6eefd_100%)]">
      <div className="h-[43px] bg-[linear-gradient(90deg,#f4f0fd_0%,#f1effd_30%,#e9f1fc_50%,#e8e8fb_75%,#eedcfa_100%)]" />
      <div className="flex h-[660px] flex-col border-y-2 border-dotted border-[#5c5a58] bg-[radial-gradient(ellipse_at_102%_16%,#e6dff9_0%,#e6dff900_28%),radial-gradient(ellipse_at_52%_30%,#ebf6fd_0%,#ebf6fd00_55%),linear-gradient(165deg,#e7eefb_0%,#e3effc_40%,#dbeefc_72%,#e0e9fb_100%)] bg-clip-padding pl-px">
        <div className="ml-[286px] mt-[28px] flex h-[58px] w-[546px] justify-center border border-[#55585c] bg-white pt-[4px]">
          <span className="whitespace-nowrap text-[23px] font-bold leading-9 tracking-[0.02px] text-[#d5394b]">Identifying best/worst performing states.</span>
        </div>
        <div className="mt-[24px] flex">
          <div className="ml-[30px] h-[510px] w-[528px] rounded bg-white px-[11px] pt-3 shadow-[0_2px_6px_rgba(80,100,160,0.25)]">
            <div className="mb-[2px] whitespace-nowrap text-[11.5px] font-semibold leading-[18px] tracking-[-0.1px] text-black">State_Revenue by ship_state</div>
            <MapVisual />
          </div>
          <div className="ml-[31px] flex h-[510px] w-[244px] border border-r-2 border-[#5f6368] bg-white">
            <div className="flex-1 pl-[7px] pt-px">
              <div className="mb-px h-[20px] text-[13.5px] font-bold leading-5 tracking-[-0.3px] text-[#ff8a14]">ship_state</div>
              {STATES.map((s) => (
                <div key={s} className="flex h-[21.87px] items-center whitespace-nowrap text-[11px] tracking-[-0.16px] text-[#333]">
                  <i className="mr-[6px] h-[11px] w-[12px] border border-[#a19f9d]" />{s}
                </div>
              ))}
            </div>
            <div className="mt-[21px] h-[293px] w-[7px] bg-[#8a8886]" />
          </div>
          <div className="ml-[24px] flex flex-col">
            <Card label="Count_of_State_Order" value="47K" h="h-[234px]" cls="pt-[86px]" />
            <Card label="Total_State_Revenue" value="27.84M" h="h-[236px]" cls="-ml-[1px] mt-[40px] pt-[87px]" />
          </div>
        </div>
      </div>
    </div>
  );
}

function PageTabs() {
  const tab = "flex h-full items-center justify-center border-r border-[#c8c6c4] bg-white tracking-[-0.1px]";
  return (
    <div className="flex h-[44px] bg-[#f3f2f1] text-[14px] text-[#252423]">
      <svg viewBox="0 0 159 44" className="h-11 w-[159px] shrink-0" fill="none" stroke="#4a4846" strokeWidth="1.6">
        <path d="M15.5 9.5h23.5v14.5H15.5zM27 24v4M22 28.5h10" />
        <rect x="13" y="35" width="30" height="3" rx="1.5" fill="#117865" stroke="none" />
        <rect x="75" y="6.5" width="15" height="24" rx="1.5" /><path d="M81 27h3" />
        <path d="M123 16v11l-6-5.5zM145 16v11l6-5.5z" fill="#c8c6c4" stroke="none" />
      </svg>
      <div className={tab + " w-[96px] border-l"}>Page 1</div>
      <div className={tab + " w-[96px]"}>Page 2</div>
      <div className={tab + " w-[95px]"}>Page 3</div>
      <div className="relative flex h-full w-[97px] items-center justify-center border-b-[5px] border-[#117865] bg-white pt-[5px] font-semibold tracking-[-0.2px]">
        Page 4<span className="absolute right-[6px] top-[4px] text-[12px] font-bold leading-4">x</span>
      </div>
      <div className={tab + " w-[96px] border-l"}>Page 5</div>
      <div className="flex w-[48px] items-center justify-center bg-[#117865]">
        <svg viewBox="0 0 14 14" className="mb-[3px] h-3.5 w-3.5" stroke="#fff" strokeWidth="3"><path d="M7 0v14M0 7h14" /></svg>
      </div>
    </div>
  );
}

/* ---------- side panes ---------- */
const Chevrons = () => (
  <svg viewBox="0 0 16 16" className="h-4 w-4" fill="none" stroke="#252423" strokeWidth="1.4"><path d="M.8.5L8 8 .8 15.5M8 .5L15.2 8 8 15.5" /></svg>
);

function FilterSection({ title }: { title: string }) {
  return (
    <div className="mb-[44px]">
      <div className="flex h-5 items-center justify-between pr-[15px] text-[14px] tracking-[0.1px]">
        {title}
        <span className="flex gap-[4px] pr-px pt-[8px]"><i className="h-[2px] w-[2px] bg-[#444]" /><i className="h-[2px] w-[2px] bg-[#444]" /><i className="h-[2px] w-[2px] bg-[#444]" /></span>
      </div>
      <div className="mt-[12px] flex h-[57px] w-[230px] items-center justify-center rounded-sm border border-[#c8c6c4] text-[14px] tracking-[0.15px] text-[#252423]">Add data fields here</div>
    </div>
  );
}

function Filters() {
  return (
    <div className="flex h-[746px] w-[251px] shrink-0 flex-col border-l border-[#a19f9d] bg-white text-[#252423]">
      <div className="flex h-[105px] flex-col border-b border-[#a19f9d] pl-[10px]">
        <div className="mt-[14px] flex h-[22px] items-center">
          <svg viewBox="0 0 22 20" className="ml-1 h-5 w-[22px]" fill="none" stroke="#252423" strokeWidth="1.8"><path d="M1 1.5h20l-7.5 9V18.5h-5V10.5z" /></svg>
          <span className="ml-[9px] w-[139px] text-[18.5px] font-semibold tracking-[-0.1px]">Filters</span>
          <svg viewBox="0 0 18 12" className="-mt-1 h-3 w-[18px]" fill="none" stroke="#252423" strokeWidth="1.5"><path d="M1 7c2-8 14-8 16 0" /><circle cx="9" cy="7" r="2.7" /></svg>
          <span className="-mt-0.5 ml-5"><Chevrons /></span>
        </div>
        <div className="mt-[21px] flex h-[42px] w-[225px] shrink-0 items-center rounded-sm border border-[#a19f9d] text-[15px]">
          <svg viewBox="0 0 20 20" className="mb-1 ml-[13px] mr-3 h-[19px] w-[19px]" fill="none" stroke="#444" strokeWidth="1.3"><circle cx="12.5" cy="7" r="6" /><path d="M8 11.5L.8 19.2" /></svg>
          Search
        </div>
      </div>
      <div className="pl-[10px] pt-[20px]">
        <FilterSection title="Filters on this page" />
        <div className="-mt-[11px]"><FilterSection title="Filters on all pages" /></div>
      </div>
    </div>
  );
}

const bolt = <g><path d="M3 0h8L8 5h4L2 15l1.5-6H-1z" fill="#f3f2f1" stroke="#f3f2f1" strokeWidth="2" /><path d="M4 .5h6L7 5.5h3.5L1.5 14l2-6H.5z" fill="#fdc65a" stroke="#d8741c" strokeWidth="1.2" /></g>;
const funnel = <path d="M12 12h11.5l-4 5v6h-3.5v-6z" fill="#fff" stroke={D} />;
const axes = <path d="M1 .5v22.5h22.5" stroke={D} strokeWidth="1.6" />;
const VIZ: React.ReactNode[] = [
  <>{axes}<path d="M2 3h4v5.5H2zM2 13h6v6H2z" fill="#fff" stroke={D} /><path d="M6.5 3h9v5.5h-9z" fill={F} stroke={B} /><path d="M8 13h13v6H8z" fill={L} stroke={G} /></>,
  <>{axes}<path d="M5 7h5.5v9H5z" fill={F} stroke={B} /><path d="M5 16h5.5v7H5zM15 15h5.5v8H15z" fill="#fff" stroke={D} /><path d="M15 3h5.5v11H15z" fill={L} stroke={G} /></>,
  <>{axes}<path d="M2 2h21v4.5H2z" fill={F} stroke={B} /><path d="M2 6.5h13V11H2z" fill="#fff" stroke={D} /><path d="M2 11.5h9v4.5H2z" fill={L} stroke={G} /><path d="M2 16.5h15V21H2z" fill="#fff" stroke={D} /></>,
  <>{axes}<path d="M3 2h5v21H3z" fill={F} stroke={B} /><path d="M8 10h5v13H8zM18 7h4.5v16H18z" fill="#fff" stroke={D} /><path d="M13 13h5v10h-5z" fill={L} stroke={G} /></>,
  <>{axes}<path d="M2 3h4v5.5H2zM2 13h12v6H2z" fill="#fff" stroke={D} /><path d="M6 3h15v5.5H6z" fill={F} stroke={B} /><path d="M14 13h7v6h-7z" fill={L} stroke={G} /></>,
  <>{axes}<path d="M5 3h5.5v15H5z" fill={F} stroke={B} /><path d="M5 18h5.5v5H5zM15 11h5.5v12H15z" fill="#fff" stroke={D} /><path d="M15 3h5.5v7H15z" fill={L} stroke={G} /></>,
  <>{axes}<path d="M2 16l5-5 5 3 5-7 6 6" stroke="#2a8ad4" strokeWidth="1.6" /><path d="M2 12l6-6 5 6 3-3 6-5" stroke={D} strokeWidth="1.6" /></>,
  <><path d="M12 13l6-12 5 9v13h-6z" fill={L} stroke={G} /><path d="M1 15L8 2l8 12-7 8H1z" fill="#fff" stroke={D} /><path d="M1 14l7 6 8-9 7 11.5H1z" fill={F} stroke={B} /></>,
  <>{axes}<path d="M2 6l6 4 6-6 4 3h5v11l-6-6-5 6-5 3-5-7z" fill={F} stroke={B} /></>,
  <>{axes}<path d="M2 2h21v14l-4 2-4-6-5 8-8-8z" fill={F} stroke={B} /></>,
  <>{axes}<path d="M5 2h5v13H5z" fill={F} stroke={B} /><path d="M15 2h5.5v9H15z" fill={L} stroke={G} /><path d="M5 17h5v6H5zM15 12h5.5v11H15z" fill="#fff" stroke={D} /><path d="M2 20l7-8 7 6 7-8" stroke={D} strokeWidth="1.5" /></>,
  <>{axes}<path d="M5 11h5v12H5z" fill={F} stroke={B} /><path d="M15 6h5.5v17H15z" fill={L} stroke={G} /><path d="M10 1.5h5.5V23H10z" fill="#fff" stroke={D} /><path d="M2 20l7-8 7 7 7-10" stroke={D} strokeWidth="1.5" /></>,
  <>{axes}<path d="M3 15.5h20v5H3z" fill="#f0a04e" stroke="#d8741c" /><path d="M3 4c5 0 6 5 10 5s5-5 10-5v5c-5 0-6 5-10 5S8 9 3 9z" fill={L} stroke={G} /><path d="M3 11c5 0 6 4 10 4s5-4 10-4v4c-5 0-6 6-10 6s-5-6-10-6z" fill={F} stroke={B} /></>,
  <>{axes}<path d="M3 7h5v16H3zM8 4h5v19H8zM17 2h5v21h-5z" fill="#fff" stroke={D} /><path d="M13 2h4v10h-4z" fill={F} stroke={B} /></>,
  <><path d="M1 2h22v6H1z" fill={F} stroke={B} /><path d="M4 8h16v6H4z" fill={F} stroke={B} /><path d="M7.5 14h9v7h-9z" fill={F} stroke={B} /></>,
  <>{axes}<path d="M17 1h4v4h-4zM5 15h4v4H5z" fill={D} /><path d="M5 5h3.5v3.5H5zM11 9h3.5v3.5H11zM17 14h4v4h-4z" fill={F} stroke="#5a9fd4" strokeWidth=".6" /></>,
  <><circle cx="12" cy="12" r="11" fill="#fff" stroke={D} /><path d="M11.5 1a11 11 0 0 1 8 19l-8-7z" fill={F} stroke={B} /></>,
  <><circle cx="12" cy="12" r="8.3" fill="none" stroke={B} strokeWidth="6.8" /><circle cx="12" cy="12" r="8.3" fill="none" stroke={F} strokeWidth="4.6" /><path d="M12 1.5A10.5 10.5 0 0 0 1.5 12H6.5A5.5 5.5 0 0 1 12 6.5z" fill="#fff" stroke={D} /></>,
  <><path d="M1 1h22v22H1z" fill="#fff" stroke={D} /><path d="M1 1h11v22H1zM1 13h11" fill={F} stroke={B} /><path d="M12 7h11M17 7v16M12 14h5M17 12h6" stroke={D} /></>,
  <><circle cx="13" cy="10.5" r="7.5" fill="#fff" stroke={D} /><path d="M9 4l6-1 4 3-3 3-5 1-3-2zM14 12h5l-2 5-4-1z" fill="#2f9a54" /><path d="M12 1C3 1 1 14 9 19M8 22.5h11M13 18v4" stroke={D} strokeWidth="1.5" /></>,
  <><path d="M1 2l4 2h15l3-2v10l-3 7-8 4-6-3-5-7z" fill={L} stroke={G} /><path d="M1 2l5 2h4l2 5-2 4H1z" fill={F} stroke={B} /><path d="M13 12l10-2-1 5-4 4-6 3-1-4z" fill={F} stroke={B} /></>,
  <><path d="M16 0L3 23l10-6z" fill="#5fb5d6" /><path d="M16 0l5.5 23-8.5-6z" fill="#1d7cc4" /></>,
  <><path d="M1 17a11 11 0 0 1 22 0h-5a6 6 0 0 0-12 0z" fill={F} stroke={B} /><path d="M1 17A11 11 0 0 1 7 7l3 4a6 6 0 0 0-4 6z" fill="#fff" stroke={D} /><path d="M10 18l7-7-3 7z" fill={D} /></>,
  <><path d="M1 3.5h22v17H1z" fill="#fff" stroke={D} strokeWidth="1.5" /><path d="M4 18h13" stroke={G} /><text x="3" y="15" fontSize="10.5" textLength="18" fill="#2a8ad4">123</text></>,
  <><path d="M1 1h22v22H1z" fill="#fff" stroke={D} strokeWidth="1.5" /><path d="M5 4v15" stroke={D} /><path d="M7 6.5h12M7 14.5h12" stroke={B} strokeWidth="2.2" /><path d="M7 9.5h6M7 18h6" stroke={G} /></>,
  <><path d="M1 2.5h22v19H1z" fill="#fff" stroke={D} strokeWidth="1.5" /><path d="M4 13l4-7 4 7z" fill="#4fb06c" stroke="#2f8a4c" /><path d="M12 6h7.5l-4 6.5z" fill="#e8606a" stroke="#c8323e" /><path d="M4 16h15M4 18.5h9" stroke={G} /></>,
  <><path d="M23 11V1.5H1v21h14" fill="#fff" stroke={D} strokeWidth="1.5" /><path d="M1 2h22v3H1z" fill={L} stroke={G} /><path d="M5 9h3.5v3.5H5zM5 16h3.5v3.5H5z" stroke={G} />{funnel}</>,
  <><path d="M1 1.5h22v21H1z" fill="#fff" stroke={D} strokeWidth="1.5" /><path d="M1 2h22v3H1z" fill={L} stroke={G} /><path d="M1 11h22M1 17h22M8.5 5v17M15.5 5v17" stroke={G} /><path d="M1 1.5h22v21H1z" stroke={D} strokeWidth="1.5" /></>,
  <><path d="M1 1.5h22v21H1z" fill="#fff" stroke={D} strokeWidth="1.5" /><path d="M1 2h22v3H1z" fill={L} stroke={G} /><path d="M15.5 5H23v17H1v-5h14.5z" fill={F} /><path d="M1 11h22M1 17h22M8.5 5v17M15.5 5v17" stroke={B} /><path d="M1 17V1.5h22V5" stroke={D} strokeWidth="1.5" /></>,
  <text x="5" y="19" fontSize="18" fontWeight="700" fill="#2585c7">R</text>,
  <text x="0" y="17.5" fontSize="18.5" fontWeight="700" textLength="24" fill="#2585c7">Py</text>,
  <>{axes}<path d="M2 5h15" stroke={B} strokeWidth="1.5" /><circle cx="19" cy="5" r="3" fill={F} stroke={B} /><path d="M2 11h10M2 16.5h5" stroke={G} strokeWidth="1.4" /><circle cx="14" cy="11" r="2" stroke={G} /><circle cx="9" cy="16.5" r="2" stroke={G} /></>,
  <><path d="M9 12h5M14 4v17M14 4h2M14 12h2M14 20h2" stroke={D} strokeWidth="1.5" /><path d="M.8 9.5h8v5h-8zM15.5 1.5H23v5h-7.5zM15.5 9.5H23v5h-7.5zM15.5 17.5H23v5h-7.5z" fill={F} stroke={B} /></>,
  <path d="M1 2.5h22v14.5H10.5L5.5 22v-5H1z" fill="#fff" stroke={B} strokeWidth="1.5" />,
  <><path d="M4 6V1.5h11l5 5v16H4v-9M15 1.5v5h5" fill="#fff" stroke={D} strokeWidth="1.5" /><circle cx="3.5" cy="9.5" r="2.5" fill={F} stroke={B} /><path d="M7 10h9M8 15h7" stroke="#2a8ad4" strokeWidth="1.5" /></>,
  <><path d="M5 3H1c0 6 1 9 6 9M19 3h4c0 6-1 9-6 9M5 1.5h14V8c0 5-3 8-7 8s-7-3-7-8zM12 16v4" fill="#fff" stroke={D} strokeWidth="1.5" /><path d="M5 1.5h14V5H5zM6 20h12v2.5H6z" fill={F} stroke={B} /></>,
  <><path d="M3 1h12l6 6v16H3zM15 1v6h6" fill="#fff" stroke={D} strokeWidth="1.6" /><path d="M6 15h3v6H6zM10.5 17h3v4h-3zM15 12h3v9h-3z" fill={D} /></>,
  <><path d="M3 4h20v16H3z" fill="#fff" stroke={D} strokeWidth="1.5" /><path d="M4 17.5h13" stroke={G} /><text x="5" y="15" fontSize="10.5" textLength="16" fill="#2a8ad4">123</text>{bolt}</>,
  <><path d="M12 2h10v9H12zM3 13h8v9H3z" fill="#fff" stroke={G} strokeWidth="1.5" /><path d="M3 7h8v5H3z" fill={F} stroke={B} />{bolt}{funnel}</>,
  <><path d="M10 2h12v10M3 13v9h12" stroke={G} strokeWidth="1.5" /><path d="M7 18l4-12 4 9" stroke="#2a8ad4" strokeWidth="1.4" />{bolt}{funnel}</>,
  <><path d="M10 2h12v10M3 13v9h12" stroke={G} strokeWidth="1.5" /><path d="M12 8h7M6 14h3v3H6z" stroke={G} strokeWidth="1.3" />{bolt}{funnel}</>,
  <><path d="M2 2h21v21H2z" fill="#fff" stroke={B} strokeWidth="1.5" /><path d="M23 2v6l-3 6-4 3-2 6H7l2-6 5-4 1-6 3-2z" fill={F} stroke={B} /><path d="M14 14h10v10H14z" fill="#f3f2f1" /><path d="M3.5-.5c3 0 4.500 2 4.500 4.500 0 3-4.500 10-4.500 10S-1 7-1 4c0-2.500 1.500-4.500 4.500-4.500z" fill="#e07010" stroke="#f3f2f1" /><circle cx="3.5" cy="4" r="1.4" fill="#fff" /><circle cx="19.500" cy="20.500" r="3.300" fill="#e07010" /><circle cx="22.500" cy="14.500" r="2" fill="#e07010" /></>,
  <g stroke="#8f3f9c" strokeWidth="1.4"><path d="M8 2h8l7 9.5-7 9.5H8L1 11.5z" fill="#faf2fb" /><path d="M9.5 2.5c-2 2 0 5 2.5 8M12 2l5.5 7M6 4.5l11 13.5M18 5L7 18M12 21l5-6" /></g>,
  <g stroke="#1a7ad0" strokeWidth="1.4"><path d="M1 2h14l8 9.5-8 9.5H1l8-9.5zM1 2l9 0 7.5 9.5L10 21M6 2l9 9.5M9 11.5h9M8 16h7" fill="#eff7fe" /></g>,
];

function Toggle({ on }: { on?: boolean }) {
  return on ? (
    <div className="flex h-5 w-10 items-center gap-[4px] rounded-full bg-[#117865] pl-[5px] text-[12px] leading-none tracking-[-0.7px] text-white">On<i className="h-2.5 w-2.5 rounded-full bg-white" /></div>
  ) : (
    <div className="flex h-5 w-10 items-center gap-[2px] rounded-full border border-[#7a7876] bg-white pl-[5px] text-[11px] leading-none tracking-[-0.5px] text-[#5f5d5b]"><i className="h-2.5 w-2.5 rounded-full bg-[#605e5c]" />Off</div>
  );
}

function Visualizations() {
  return (
    <div className="flex w-[226px] shrink-0 flex-col border-l border-[#e1dfdd] bg-[#f3f2f1] text-[#252423]">
      <div className="mt-[14px] flex h-[22px] items-center justify-between px-[10px]">
        <span className="text-[19px] font-semibold tracking-[-0.2px]">Visualizations</span><Chevrons />
      </div>
      <div className="ml-[10px] mt-[11px] h-[22px] text-[14.5px] font-semibold leading-[22px] tracking-[-0.2px]">Build visual</div>
      <div className="ml-[10px] mt-[3px] flex h-10">
        <div className="h-10 w-10 rounded-sm bg-[#d2d0ce]">
          <svg viewBox="0 0 40 40" className="h-10 w-10" stroke="#222" strokeWidth="1.6">
            <path d="M5 5.5h24" /><rect x="5.5" y="12" width="29" height="8.5" fill="#117865" strokeDasharray="2.5 1.5" /><rect x="5.5" y="25.5" width="29" height="8.5" fill="#117865" strokeDasharray="2.5 1.5" />
          </svg>
        </div>
        <svg viewBox="0 0 32 32" className="ml-[46px] mt-1 h-8 w-8" fill="none" stroke="#252423" strokeWidth="1.5">
          <path d="M7 30H2V1.5h13l8 9v3M15 1.5v9h8" /><path d="M31 11.5c-5 2-10 7-13 12l2.5 2.5c4-3 8-8 10.5-14.5zM18 23.5c-3 0-4 2-4 4 0 1-2 2-4 2 5 2.5 10 1 10.5-3.5" fill="#f3f2f1" />
        </svg>
      </div>
      <svg viewBox="0 0 225 12" className="mt-[5px] h-3 w-[225px]" fill="none" stroke="#8a8886" strokeWidth="1.2"><path d="M0 10.5h20L30 1.5l10 9h185" /></svg>
      <div className="ml-[13px] mt-[12px] grid auto-rows-[35px] grid-cols-[repeat(6,35px)]">
        {VIZ.map((v, i) => (
          <svg key={i} viewBox="0 0 24 24" className="h-6 w-6 overflow-visible" fill="none" strokeWidth="1.2" fontFamily="Open Sans, sans-serif">{v}</svg>
        ))}
        <span className="ml-[2px] mt-[9px] flex gap-[6px]"><i className="h-[2px] w-[2px] bg-[#222]" /><i className="h-[2px] w-[2px] bg-[#222]" /><i className="h-[2px] w-[2px] bg-[#222]" /></span>
      </div>
      <div className="flex flex-col border-t border-[#e1dfdd] pt-[11px] text-[14px] leading-5">
        <div className="pl-[15px]">Values</div>
        <div className="ml-[5px] mt-[6px] flex h-[35px] w-[213px] items-center border border-dashed border-[#c0bebc] bg-white pl-[13px] tracking-[0.15px]">Add data fields here</div>
        <div className="pl-[15px] pt-[14px] font-semibold tracking-[-0.2px] text-[#484644]">Drill through</div>
        <div className="mt-[10px] flex h-[21px] items-center justify-between pl-[15px] pr-[27px]"><span>Cross-report</span><Toggle /></div>
        <div className="mt-[13px] flex h-[21px] items-center justify-between pl-[15px] pr-[27px]"><span>Keep all filters</span><Toggle on /></div>
        <div className="ml-[5px] mt-[13px] flex h-[32px] w-[213px] items-center whitespace-nowrap border border-dashed border-[#c0bebc] bg-white pl-[10px] pt-px tracking-[0.15px]">Add drill-through fields here</div>
      </div>
    </div>
  );
}

function DataPane() {
  return (
    <div className="flex w-[226px] shrink-0 flex-col border-l border-[#e1dfdd] bg-[#f3f2f1] text-[#252423]">
      <div className="mt-[14px] flex h-[22px] items-center justify-between px-[10px]">
        <span className="text-[19px] font-semibold tracking-[-0.4px]">Data</span><Chevrons />
      </div>
      <div className="ml-[5px] mt-[21px] flex h-[30px] w-[215px] items-center rounded border border-[#c8c6c4] border-b-[#605e5c] bg-white pt-px text-[16px] text-[#757371]">
        <svg viewBox="0 0 20 20" className="ml-[14px] mr-[9px] h-[18px] w-[18px]" fill="none" stroke="#555" strokeWidth="1.4"><circle cx="8" cy="8" r="7" /><path d="M13 13l6 6" /></svg>
        Search
      </div>
      <div className="mt-[11px]">
        {["amazon_data daily_sal...", "amazon_data fulfilme...", "amazon_data product...", "amazon_data shorted_...", "amazon_data state_pe..."].map((t) => (
          <div key={t} className="flex h-[30px] items-center whitespace-nowrap text-[14px] tracking-[0.02px] text-[#323130]">
            <svg viewBox="0 0 9 16" className="ml-[19px] h-[15px] w-[9px] shrink-0" fill="none" stroke="#555" strokeWidth="1.2"><path d="M1 1l7 7-7 7" /></svg>
            <svg viewBox="0 0 16 16" className="ml-[8px] mr-[7px] h-4 w-4 shrink-0" fill="none" stroke="#323130" strokeWidth="1.3"><rect x=".8" y=".8" width="14.4" height="14.4" rx="2.5" /><path d="M5.5.8v14.4M10.5.8v14.4M.8 5.5h14.4M.8 10.5h14.4" /></svg>
            {t}
          </div>
        ))}
      </div>
    </div>
  );
}

function StatusBar() {
  return (
    <div className="flex h-[30px] items-center border-b-2 border-t border-b-black border-t-[#dddbd9] bg-[#f3f2f1] text-[14px] text-[#484644]">
      <span className="ml-[5px] mt-1 tracking-[0.1px]">Page 4 of 5</span>
      <svg viewBox="0 0 160 20" className="ml-auto mr-[15px] mt-px h-5 w-[160px] shrink-0" fill="none" stroke="#605e5c" strokeWidth="1.2">
        <path d="M17 10h125M79.5 6.5v7" /><path d="M5 9.5h6M149 9.5h10M154 4.5v10" strokeWidth="2" /><rect x="58" y="3.5" width="5" height="13" fill="#605e5c" stroke="none" />
      </svg>
      <span className="mt-0.5 w-[52px] text-[14px] tracking-[-0.1px]">73%</span>
      <svg viewBox="0 0 21 16" className="mr-[22px] h-4 w-[21px] shrink-0" fill="none" stroke="#605e5c" strokeWidth="1.4"><rect x="1" y="1" width="19" height="14" /><path d="M4 6.5V4h3M14 4h3v2.5M17 9.5V12h-3M7 12H4V9.5" strokeWidth="1.2" /></svg>
    </div>
  );
}

export default function App() {
  return (
    <div className="flex h-[1020px] w-[1920px] flex-col overflow-hidden bg-[#f3f2f1] font-['Open_Sans','Noto_Sans',sans-serif]">
      <TitleBar />
      <Menu />
      <Ribbon />
      <div className="flex h-[790px]">
        <Rail />
        <div className="flex w-[1417px] shrink-0 flex-col">
          <div className="flex">
            <div className="w-[1166px] shrink-0"><Canvas /></div>
            <Filters />
          </div>
          <PageTabs />
        </div>
        <Visualizations />
        <DataPane />
      </div>
      <StatusBar />
    </div>
  );
}
